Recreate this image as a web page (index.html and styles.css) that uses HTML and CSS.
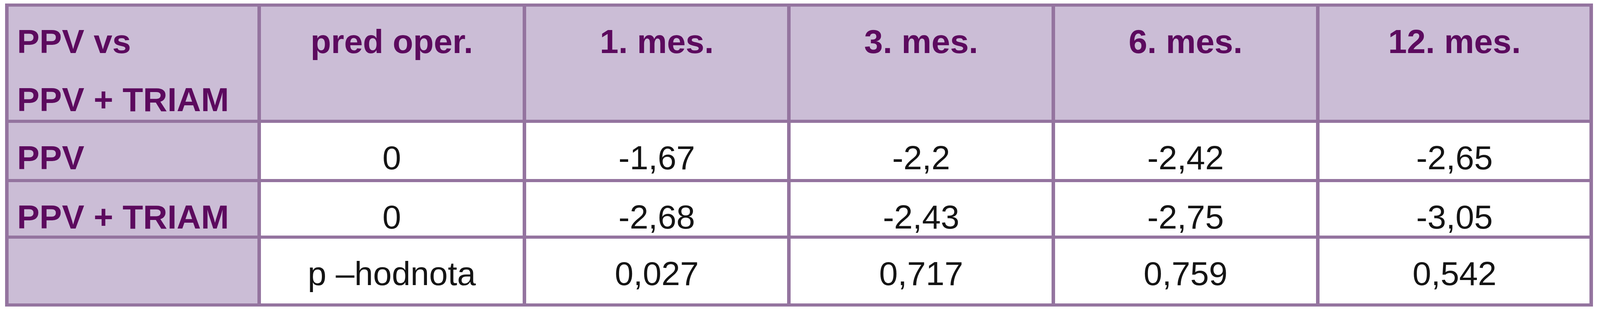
FILE: index.html
```html
<!DOCTYPE html>
<html lang="sk">
<head>
<meta charset="utf-8">
<title>PPV vs PPV + TRIAM</title>
<link rel="stylesheet" href="styles.css">
</head>
<body>
<div class="page">
  <div class="grid">
    <div class="cell head first">PPV vs<br>PPV + TRIAM</div>
    <div class="cell head">pred oper.</div>
    <div class="cell head">1. mes.</div>
    <div class="cell head">3. mes.</div>
    <div class="cell head">6. mes.</div>
    <div class="cell head">12. mes.</div>

    <div class="cell head first">PPV</div>
    <div class="cell">0</div>
    <div class="cell">-1,67</div>
    <div class="cell">-2,2</div>
    <div class="cell">-2,42</div>
    <div class="cell">-2,65</div>

    <div class="cell head first">PPV + TRIAM</div>
    <div class="cell">0</div>
    <div class="cell">-2,68</div>
    <div class="cell">-2,43</div>
    <div class="cell">-2,75</div>
    <div class="cell">-3,05</div>

    <div class="cell head first"></div>
    <div class="cell">p –hodnota</div>
    <div class="cell">0,027</div>
    <div class="cell">0,717</div>
    <div class="cell">0,759</div>
    <div class="cell">0,542</div>
  </div>
</div>
</body>
</html>
```

FILE: styles.css
```css
html, body {
  margin: 0;
  padding: 0;
  background: #ffffff;
}

.page {
  padding: 9px 18px 0 13px;
}

.grid {
  display: grid;
  grid-template-columns: 1093fr 1151fr 1147fr 1146fr 1147fr 1186fr;
  grid-template-rows: 290px 144px 137px 166px;
  column-gap: 9px;
  row-gap: 8px;
  padding: 8px 9px;
  background: #94749f;
  font-family: "Liberation Sans", Arial, sans-serif;
  font-size: min(107px, 2.1vw);
  line-height: 149px;
}

.cell {
  min-width: 0;
  background: #ffffff;
  color: #141414;
  text-align: center;
  padding-top: calc(43.5px - 0.3305em);
  white-space: nowrap;
}

.cell.head {
  background: #cbbdd6;
  color: #5c0a5e;
  font-weight: bold;
}

.cell.first {
  text-align: left;
  padding-left: min(37px, 0.531vw);
}
```
